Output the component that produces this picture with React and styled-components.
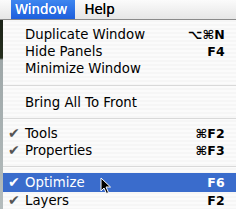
import React from "react";
import styled, { createGlobalStyle } from "styled-components";

const GlobalStyle = createGlobalStyle`
  html, body {
    margin: 0;
    padding: 0;
    width: 236px;
    height: 209px;
    overflow: hidden;
    background: #f2f2f2;
  }
  * { box-sizing: border-box; }
`;

const Screen = styled.div`
  width: 236px;
  height: 209px;
  overflow: hidden;
  font-family: "DejaVu Sans", "Liberation Sans", sans-serif;
  font-size: 13.3px;
  color: #000;
  display: flex;
  flex-direction: column;
`;

const MenuBar = styled.div`
  height: 20px;
  flex: none;
  display: flex;
  align-items: stretch;
  gap: 5px;
  padding-left: 11px;
  background: linear-gradient(#fbfbfb, #e6e6e6);
  border-bottom: 1px solid #8a8a8a;
`;

const BarTitle = styled.div`
  display: flex;
  align-items: center;
  padding: 0 8px 0 4px;
  line-height: 19px;
  background: ${(p) => (p.$open ? "linear-gradient(#3d86f0, #1e5fdc)" : "transparent")};
  color: ${(p) => (p.$open ? "#fff" : "#000")};
  text-shadow: ${(p) => (p.$open ? "0 0 0.4px #fff" : "0 0 0.4px #000")};
`;

const Body = styled.div`
  flex: 1;
  display: flex;
  min-height: 0;
`;

const BehindStrip = styled.div`
  width: 3px;
  flex: none;
  background: linear-gradient(#1c2318 0, #26301f 38px, #9ea7a8 40px, #b4bcbd 100%);
`;

const Menu = styled.div`
  position: relative;
  flex: 1;
  padding-top: 6px;
  display: flex;
  flex-direction: column;
  background: repeating-linear-gradient(#f6f6f6 0, #f6f6f6 2px, #fbfbfb 2px, #fbfbfb 4px);
`;

const Item = styled.div`
  flex: none;
  height: ${(p) => (p.$active ? 19 : 17)}px;
  line-height: ${(p) => (p.$active ? 19 : 17)}px;
  display: flex;
  align-items: center;
  padding: 0 11px 0 5px;
  background: ${(p) => (p.$active ? "#3a6ccc" : "transparent")};
  color: ${(p) => (p.$active ? "#fff" : "#000")};
`;

const Check = styled.span`
  width: 17px;
  flex: none;
  font-size: 14px;
  color: ${(p) => (p.$active ? "#fff" : "#555")};
`;

const Label = styled.span`
  flex: 1;
  white-space: nowrap;
`;

const Shortcut = styled.span`
  font-size: 12.5px;
  font-weight: bold;
  white-space: nowrap;
  letter-spacing: 0.2px;
`;

const Separator = styled.div`
  flex: none;
  height: ${(p) => p.$h}px;
  display: flex;
  align-items: center;
  &::after {
    content: "";
    flex: 1;
    height: 1px;
    background: #d9d9d9;
  }
`;

const Pointer = styled.svg`
  position: absolute;
  left: 97px;
  top: 157px;
`;

const items = [
  { label: "Duplicate Window", key: "⌥⌘N" },
  { label: "Hide Panels", key: "F4" },
  { label: "Minimize Window" },
  { sep: 17 },
  { label: "Bring All To Front" },
  { sep: 14 },
  { label: "Tools", key: "⌘F2", checked: true },
  { label: "Properties", key: "⌘F3", checked: true },
  { sep: 14 },
  { label: "Optimize", key: "F6", checked: true, active: true },
  { label: "Layers", key: "F2", checked: true },
];

export default function App() {
  return (
    <Screen>
      <GlobalStyle />
      <MenuBar>
        <BarTitle $open>Window</BarTitle>
        <BarTitle>Help</BarTitle>
      </MenuBar>
      <Body>
        <BehindStrip />
        <Menu>
          {items.map((it, i) =>
            it.sep ? (
              <Separator key={i} $h={it.sep} />
            ) : (
              <Item key={i} $active={it.active}>
                <Check $active={it.active}>{it.checked ? "✔" : ""}</Check>
                <Label>{it.label}</Label>
                {it.key && <Shortcut>{it.key}</Shortcut>}
              </Item>
            )
          )}
          <Pointer width="12" height="18" viewBox="0 0 12 18">
            <path
              d="M1 1 L1 14 L4 11 L6.5 16.5 L8.5 15.5 L6 10 L10.5 10 Z"
              fill="#000"
              stroke="#fff"
              strokeWidth="1"
              strokeLinejoin="round"
            />
          </Pointer>
        </Menu>
      </Body>
    </Screen>
  );
}
